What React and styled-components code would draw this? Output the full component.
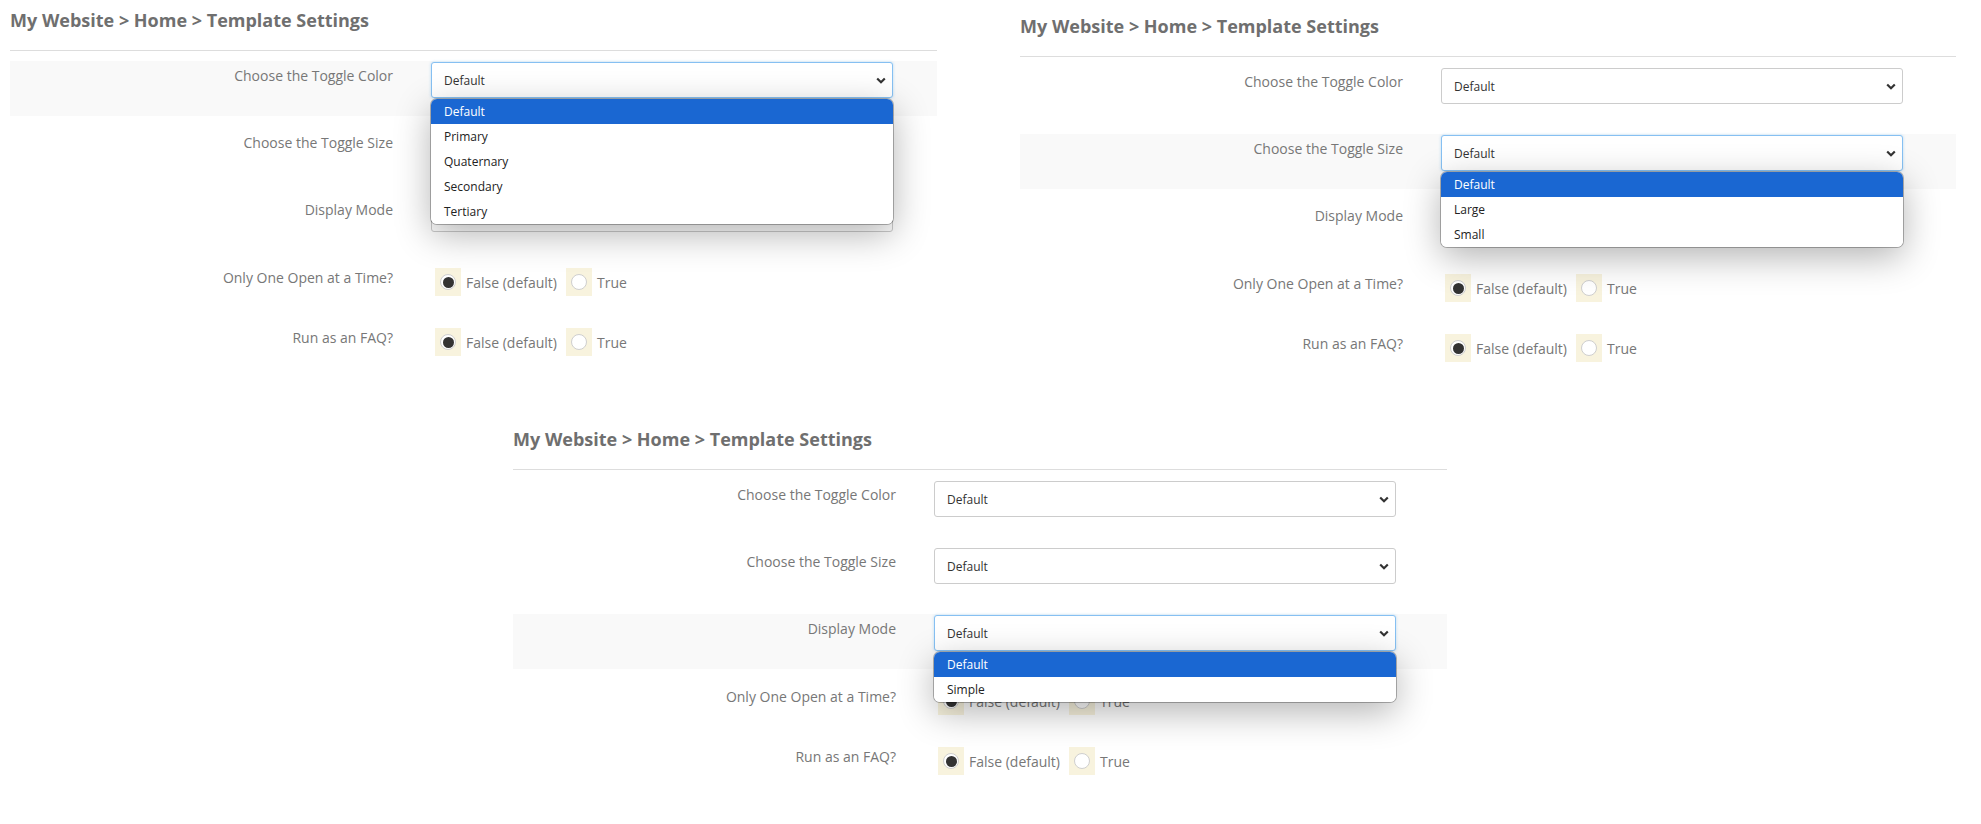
import styled, { createGlobalStyle } from "styled-components";

const GlobalStyle = createGlobalStyle`
  body {
    margin: 0;
    background: #fff;
    font-family: "Open Sans", "Liberation Sans", sans-serif;
  }
`;

const Page = styled.div`
  padding-top: 8px;
  width: 1981px;
`;

const TopRow = styled.div`
  display: flex;
  align-items: flex-start;
  gap: 83px;
  height: 419px;
  padding-left: 10px;
`;

const BottomRow = styled.div`
  display: flex;
  padding-left: 513px;
`;

const Panel = styled.section`
  width: ${(p) => p.$width}px;
  margin-top: ${(p) => p.$offset || 0}px;
`;

const Title = styled.h4`
  margin: 0;
  padding-bottom: 18px;
  border-bottom: 1px solid #dddddd;
  font-size: 18px;
  line-height: 23px;
  padding-top: 1px;
  font-weight: 700;
  color: #6f6f6f;
`;

const Form = styled.div`
  display: flex;
  flex-direction: column;
  gap: 12px;
  margin-top: 10px;
`;

const Row = styled.div`
  display: grid;
  grid-template-columns: 383px 462px;
  column-gap: 38px;
  align-items: start;
  height: ${(p) => (p.$radio ? 48 : 55)}px;
  box-sizing: border-box;
  padding-top: 1px;
  background: ${(p) => (p.$active ? "#f9f9f9" : "transparent")};
`;

const Label = styled.label`
  text-align: right;
  font-size: 14px;
  line-height: 20px;
  padding-top: ${(p) => (p.$radio ? 5 : 4)}px;
  color: #777;
`;

const SelectWrap = styled.div`
  position: relative;
`;

const SelectBox = styled.div`
  height: 36px;
  box-sizing: border-box;
  display: flex;
  align-items: center;
  justify-content: space-between;
  padding: 0 6px 0 12px;
  border: 1px solid ${(p) => (p.$focus ? "#86c0f2" : "#cccccc")};
  border-radius: 3px;
  box-shadow: ${(p) =>
    p.$focus ? "0 0 3px rgba(102, 175, 233, 0.45)" : "none"};
  background: #fff;
  font-size: 12px;
  color: #333;
`;

const Dropdown = styled.ul`
  position: absolute;
  top: calc(100% + 1px);
  left: 0;
  right: 0;
  z-index: 10;
  margin: 0;
  padding: 0;
  list-style: none;
  background: #fff;
  border-radius: 6px;
  overflow: hidden;
  box-shadow: 0 0 0 1px rgba(0, 0, 0, 0.28), 0 10px 36px rgba(0, 0, 0, 0.3);
`;

const Option = styled.li`
  height: 25px;
  line-height: 25px;
  padding-left: 13px;
  font-size: 12px;
  color: ${(p) => (p.$selected ? "#fff" : "#222")};
  background: ${(p) => (p.$selected ? "#1a67d2" : "#fff")};
`;

const RadioGroup = styled.div`
  display: flex;
  align-items: center;
  margin-top: 5px;
  margin-left: 4px;
`;

const RadioCell = styled.span`
  width: 26px;
  height: 28px;
  display: flex;
  align-items: center;
  justify-content: center;
  background: #f8f3de;
`;

const RadioDot = styled.span`
  width: 16px;
  height: 16px;
  box-sizing: border-box;
  border-radius: 50%;
  border: 1px solid #cfcfcf;
  background: #fff;
  display: flex;
  align-items: center;
  justify-content: center;

  &::after {
    content: "";
    width: 11px;
    height: 11px;
    border-radius: 50%;
    background: ${(p) => (p.$checked ? "#333" : "transparent")};
  }
`;

const RadioText = styled.span`
  font-size: 14px;
  color: #777;
  margin: 0 9px 0 5px;
`;

const Chevron = () => (
  <svg width="10" height="7" viewBox="0 0 10 7">
    <polyline
      points="1.2,1.5 5,5.2 8.8,1.5"
      fill="none"
      stroke="#333"
      strokeWidth="2.2"
    />
  </svg>
);

const SelectField = ({ open, options }) => (
  <SelectWrap>
    <SelectBox $focus={open}>
      <span>Default</span>
      <Chevron />
    </SelectBox>
    {open && (
      <Dropdown>
        {options.map((o, i) => (
          <Option key={o} $selected={i === 0}>
            {o}
          </Option>
        ))}
      </Dropdown>
    )}
  </SelectWrap>
);

const RadioField = () => (
  <RadioGroup>
    <RadioCell>
      <RadioDot $checked />
    </RadioCell>
    <RadioText>False (default)</RadioText>
    <RadioCell>
      <RadioDot />
    </RadioCell>
    <RadioText>True</RadioText>
  </RadioGroup>
);

const selects = [
  {
    label: "Choose the Toggle Color",
    options: ["Default", "Primary", "Quaternary", "Secondary", "Tertiary"],
  },
  { label: "Choose the Toggle Size", options: ["Default", "Large", "Small"] },
  { label: "Display Mode", options: ["Default", "Simple"] },
];

const radios = ["Only One Open at a Time?", "Run as an FAQ?"];

const SettingsPanel = ({ width, offset, openIndex }) => (
  <Panel $width={width} $offset={offset}>
    <Title>My Website &gt; Home &gt; Template Settings</Title>
    <Form>
      {selects.map((s, i) => (
        <Row key={s.label} $active={i === openIndex}>
          <Label>{s.label}</Label>
          <SelectField open={i === openIndex} options={s.options} />
        </Row>
      ))}
      {radios.map((r) => (
        <Row key={r} $radio>
          <Label $radio>{r}</Label>
          <RadioField />
        </Row>
      ))}
    </Form>
  </Panel>
);

export default function App() {
  return (
    <>
      <GlobalStyle />
      <Page>
        <TopRow>
          <SettingsPanel width={927} offset={0} openIndex={0} />
          <SettingsPanel width={936} offset={6} openIndex={1} />
        </TopRow>
        <BottomRow>
          <SettingsPanel width={934} offset={0} openIndex={2} />
        </BottomRow>
      </Page>
    </>
  );
}
